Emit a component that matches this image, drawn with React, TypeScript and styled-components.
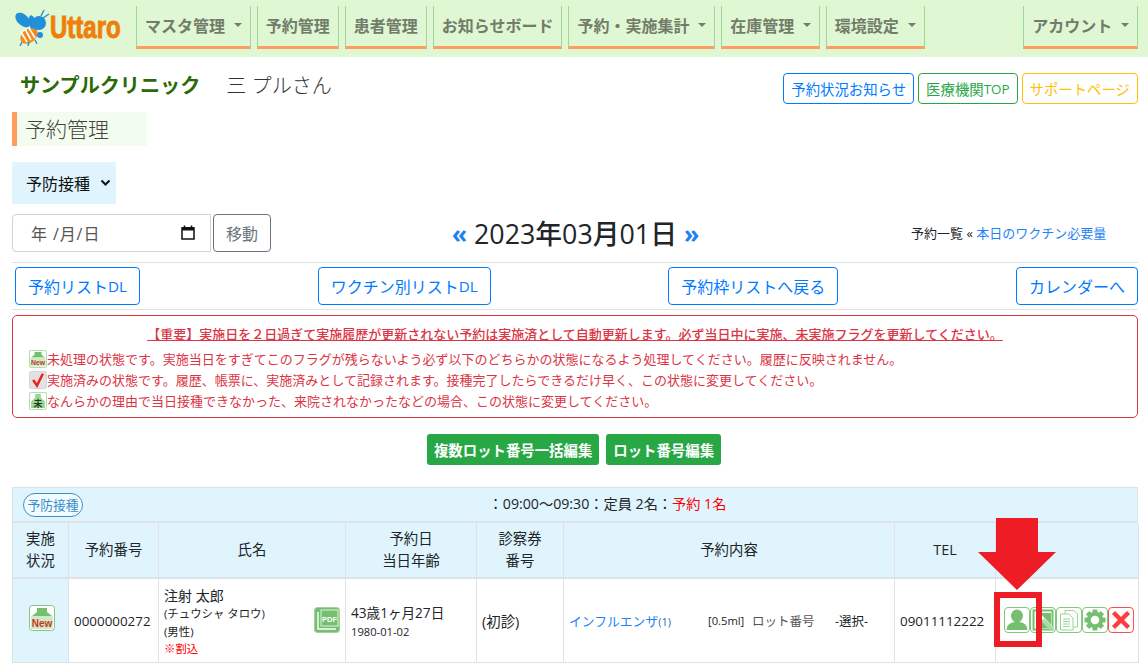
import React from 'react';
import styled, { createGlobalStyle } from 'styled-components';

const GlobalStyle = createGlobalStyle`
  html, body {
    margin: 0;
    padding: 0;
    background: #fff;
    overflow: hidden;
  }
  body {
    font-family: "Open Sans", "Noto Sans CJK JP", sans-serif;
    color: #212529;
  }
  * { box-sizing: border-box; }
`;

const Page = styled.div`
  position: relative;
  width: 1148px;
  height: 669px;
  overflow: hidden;
`;

// ---- top navigation ----
const NavBar = styled.nav`
  display: flex;
  align-items: flex-start;
  height: 57px;
  padding: 6px 10px 0 14px;
  background: #dff7d2;
`;

const Logo = styled.div`
  display: flex;
  flex: none;
  align-items: center;
  width: 122px;
  height: 42px;
`;

const BeeSvg = styled.svg`
  flex: none;
`;

const LogoText = styled.span`
  display: inline-block;
  flex: none;
  width: 70px;
  margin-left: 0;
  font-family: "Liberation Sans", sans-serif;
  font-size: 32px;
  font-weight: 700;
  line-height: 1;
  color: #f07f09;
  transform: scaleX(0.75);
  transform-origin: left center;
  -webkit-text-stroke: 1px #f07f09;
`;

const NavItems = styled.div`
  display: flex;
  flex: 1;
  gap: 6px;
`;

const NavItem = styled.a<{ $right?: boolean }>`
  display: flex;
  align-items: center;
  height: 43px;
  padding: 0 8px 3px;
  margin-left: ${p => (p.$right ? 'auto' : '0')};
  border-left: 1px solid #9fd69a;
  border-right: 1px solid #9fd69a;
  border-bottom: 3px solid #ff9d5c;
  font-size: 16px;
  font-weight: 700;
  color: #727c6b;
  white-space: nowrap;
`;

const Caret = styled.span`
  display: inline-block;
  margin-left: 8.7px;
  border-top: 4.8px solid #727c6b;
  border-left: 4.8px solid transparent;
  border-right: 4.8px solid transparent;
`;

// ---- clinic line ----
const ClinicRow = styled.div`
  display: flex;
  align-items: flex-start;
  justify-content: space-between;
  height: 49px;
  padding: 16px 10px 0 20px;
`;

const ClinicInfo = styled.div`
  display: flex;
  align-items: center;
  gap: 26px;
  height: 26px;
  font-size: 20.1px;
  line-height: 26px;
`;

const ClinicName = styled.span`
  font-weight: 700;
  color: #2b6a07;
`;

const StaffName = styled.span`
  font-weight: 300;
  color: #333;
`;

const HeaderLinks = styled.div`
  display: flex;
  gap: 4px;
`;

const SmallLink = styled.a<{ $color: string }>`
  display: flex;
  align-items: center;
  height: 31px;
  padding: 0 7px;
  border: 1px solid ${p => p.$color};
  border-radius: 4px;
  font-size: 14.4px;
  color: ${p => p.$color};
  white-space: nowrap;
`;

const TopLabel = styled.span`
  font-size: 13.4px;
`;

const TitleWrap = styled.div`
  padding: 6px 0 0 12px;
`;

const PageTitle = styled.h1`
  display: flex;
  align-items: center;
  width: 135px;
  height: 34px;
  margin: 0;
  padding: 0 0 3px 8px;
  background: #f3fdef;
  border-left: 5px solid #ff9d5c;
  font-size: 21px;
  font-weight: 300;
  color: #444;
`;

const SelectWrap = styled.div`
  padding: 16px 0 0 12px;
`;

const Kind = styled.div`
  display: flex;
  align-items: center;
  justify-content: space-between;
  width: 104px;
  height: 42px;
  padding: 0 5px 0 14px;
  background: #dff4fd;
  font-size: 16px;
  color: #111;
`;

// ---- date row ----
const DateRow = styled.div`
  display: grid;
  grid-template-columns: 259px 1fr 227px;
  align-items: center;
  height: 38px;
  margin: 9px 10px 0 12px;
`;

const DateGroup = styled.div`
  display: flex;
  gap: 2px;
`;

const DateInput = styled.div`
  display: flex;
  align-items: center;
  justify-content: space-between;
  width: 199px;
  height: 38px;
  padding: 0 15px 0 18px;
  border: 1px solid #ced4da;
  border-radius: 4px 0 0 4px;
  font-size: 16px;
  letter-spacing: 0.9px;
  color: #555;
`;

const MoveButton = styled.button`
  width: 58px;
  height: 38px;
  padding: 0;
  background: #fff;
  border: 1px solid #6c757d;
  border-radius: 4px;
  font: inherit;
  font-size: 16px;
  color: #6c757d;
`;

const DateHeading = styled.div`
  display: flex;
  align-items: center;
  justify-content: center;
  gap: 7px;
  padding-right: 31px;
  font-size: 26.8px;
  font-weight: 500;
  color: #212529;
`;

const DateArrow = styled.a`
  font-size: 25px;
  font-weight: 700;
  color: #1f7ff0;
`;

const Crumbs = styled.div`
  font-size: 13px;
  white-space: nowrap;
  color: #212529;
`;

const CrumbLink = styled.a`
  color: #1f82f5;
`;

const Rule = styled.hr<{ $top?: number }>`
  height: 1px;
  margin: ${p => p.$top ?? 0}px 10px 0 12px;
  border: 0;
  background: #e2e2e2;
`;

const ActionRow = styled.div`
  display: flex;
  justify-content: space-between;
  padding: 4px 10px 4px 15px;
`;

const OutlineButton = styled.a`
  display: flex;
  align-items: center;
  height: 38px;
  padding: 0 12px;
  border: 1px solid #007bff;
  border-radius: 4px;
  font-size: 16px;
  color: #007bff;
  white-space: nowrap;
`;

const LatinSmall = styled.span`
  font-size: 15.2px;
`;

// ---- notice ----
const Alert = styled.div`
  height: 103px;
  margin: 5px 10px 0 12px;
  padding: 8px 16px 0;
  border: 1px solid #dc3545;
  border-radius: 5px;
  font-size: 13px;
  color: #dc3545;
`;

const AlertTitle = styled.div`
  height: 24px;
  line-height: 21px;
  text-align: center;
  font-weight: 500;
  text-decoration: underline;
`;

const AlertLine = styled.div`
  display: flex;
  align-items: center;
  height: 21px;
  white-space: nowrap;
`;

const LotRow = styled.div`
  display: flex;
  justify-content: center;
  gap: 7px;
  padding: 16px 0 0;
`;

const LotButton = styled.a`
  display: flex;
  align-items: center;
  height: 31px;
  padding: 0 7px;
  background: #28a745;
  border-radius: 3px;
  font-size: 14.4px;
  font-weight: 700;
  color: #fff;
  white-space: nowrap;
`;

// ---- reservation table ----
const TableWrap = styled.div`
  margin: 22px 10px 0 12px;
`;

const Caption = styled.div`
  display: flex;
  align-items: center;
  height: 36px;
  padding: 0 0 0 10px;
  background: #dff4fd;
  border: 1px solid #dee2e6;
  border-bottom-width: 2px;
`;

const Pill = styled.span`
  display: flex;
  align-items: center;
  justify-content: center;
  width: 60px;
  height: 24px;
  border: 1px solid #3a8fc8;
  border-radius: 12px;
  font-size: 12.8px;
  color: #3a8fc8;
  background: #f2fbff;
`;

const CaptionText = styled.div`
  flex: 1;
  padding: 0 5px 3px 0;
  text-align: center;
  font-size: 14.2px;
`;

const RedText = styled.span`
  color: #f00;
`;

const Table = styled.table`
  width: 1126px;
  table-layout: fixed;
  border-collapse: collapse;
  font-size: 14.4px;
`;

const Th = styled.th<{ $w?: number }>`
  width: ${p => (p.$w ? `${p.$w}px` : 'auto')};
  height: 55px;
  padding: 0;
  background: #dff4fd;
  border: 1px solid #dee2e6;
  border-top: 0;
  border-bottom-width: 2px;
  font-weight: 400;
  line-height: 22px;
  text-align: center;
`;

const Td = styled.td<{ $tint?: boolean; $center?: boolean }>`
  height: 84px;
  padding: 0 ${p => (p.$center ? 0 : 5)}px 0 ${p => (p.$center ? 2 : 5)}px;
  background: ${p => (p.$tint ? '#dff4fd' : '#fff')};
  border: 1px solid #dee2e6;
  text-align: ${p => (p.$center ? 'center' : 'left')};
  vertical-align: middle;
`;

const Digits = styled.span`
  font-size: 13.4px;
`;

const NameCell = styled.div`
  display: flex;
  align-items: center;
  justify-content: space-between;
`;

const NameLines = styled.div`
  display: flex;
  flex-direction: column;
  padding-top: 3px;
`;

const NameMain = styled.span`
  font-size: 14px;
  line-height: 19px;
`;

const NameSub = styled.span<{ $red?: boolean }>`
  font-size: 11.4px;
  line-height: 17.4px;
  color: ${p => (p.$red ? '#f00' : '#212529')};
`;

const AgeBlock = styled.div`
  padding-top: 3px;
`;

const AgeMain = styled.div`
  font-size: 13.6px;
  line-height: 20px;
`;

const AgeSub = styled.div`
  font-size: 11.2px;
  line-height: 18px;
`;

const PlanCell = styled.div`
  display: flex;
  align-items: center;
  font-size: 12.5px;
  white-space: nowrap;
`;

const PlanLink = styled.a`
  width: 139px;
  font-size: 12.8px;
  color: #1f82f5;
`;

const PlanSmall = styled.small`
  font-size: 11px;
  color: #2b6fb0;
`;

const PlanDose = styled.span`
  width: 44px;
  font-size: 11.2px;
`;

const PlanLot = styled.span`
  width: 83px;
  color: #555;
`;

const Tools = styled.div`
  display: flex;
  padding-left: 3px;
`;

const ToolBox = styled.span<{ $red?: boolean }>`
  display: flex;
  align-items: center;
  justify-content: center;
  width: 26px;
  height: 26px;
  background: #fff;
  border: 1px solid ${p => (p.$red ? '#ff4d4d' : '#7fc97a')};
  border-radius: 4px;
`;

// ---- annotation over the screenshot ----
const ArrowMark = styled.svg`
  position: absolute;
  left: 978px;
  top: 518px;
`;

const RedFrame = styled.div`
  position: absolute;
  left: 994px;
  top: 592px;
  width: 48px;
  height: 55px;
  border: 6px solid #ee1c25;
`;

const StatusBox = styled.svg`
  flex: none;
`;

function BeeLogo() {
  return (
    <BeeSvg width="36" height="38" viewBox="0 0 36 38">
      <ellipse cx="9" cy="12" rx="9" ry="5.5" fill="#2190d8" transform="rotate(42 9 12)" />
      <ellipse cx="19" cy="16" rx="3.6" ry="9" fill="#2190d8" transform="rotate(-15 19 16)" />
      <circle cx="25" cy="15" r="7" fill="#2190d8" />
      <ellipse cx="15" cy="28" rx="6.6" ry="9.5" fill="#f58a1f" transform="rotate(55 15 28)" />
      <path d="M11 21 L17 32 M15 20 L21 30 M7 24 L13 34" stroke="#fff" strokeWidth="1.6" />
      <circle cx="26" cy="27" r="3" fill="#2190d8" />
      <path d="M27 8 L30 2 M29 10 L35 6 M8 34 L6 38 M15 34 L14 38 M21 32 L23 36" stroke="#2190d8" strokeWidth="1.4" fill="none" />
    </BeeSvg>
  );
}

function NewIcon({ size = 26 }: { size?: number }) {
  return (
    <StatusBox width={size} height={size} viewBox="0 0 26 26">
      <rect x="0.5" y="0.5" width="25" height="25" rx="3" fill="#fff" stroke="#7fc97a" />
      <path d="M8 3 H18 V7 L23 11 H3 L8 7 Z" fill="#74bf70" />
      <rect x="2" y="11" width="22" height="13" rx="1" fill="#cfe9cb" />
      <text x="13" y="22" textAnchor="middle" fontFamily="Liberation Sans" fontSize="10" fontWeight="700" fill="#c4391c">New</text>
    </StatusBox>
  );
}

function DoneIcon() {
  return (
    <StatusBox width={18} height={18} viewBox="0 0 26 26">
      <rect x="0.5" y="0.5" width="25" height="25" rx="3" fill="#e2e2e2" stroke="#c8c8c8" />
      <path d="M6 13 L11.5 21 L20 4" fill="none" stroke="#e8231a" strokeWidth="3.6" />
    </StatusBox>
  );
}

function MissedIcon() {
  return (
    <StatusBox width={18} height={18} viewBox="0 0 26 26">
      <rect x="0.5" y="0.5" width="25" height="25" rx="3" fill="#fff" stroke="#7fc97a" />
      <path d="M9 3 H17 V8 L23 14 V23 H3 V14 L9 8 Z" fill="#9ad596" />
      <text x="13" y="21" textAnchor="middle" fontFamily="Noto Sans CJK JP" fontSize="13" fontWeight="700" fill="#1d3d1d">未</text>
    </StatusBox>
  );
}

function PdfIcon() {
  return (
    <svg width="26" height="26" viewBox="0 0 26 26">
      <rect x="0.5" y="0.5" width="25" height="25" rx="3" fill="#74bf70" stroke="#9ad596" />
      <path d="M4 5 V22 H22" fill="none" stroke="#fff" strokeWidth="1.4" />
      <rect x="7" y="3" width="17" height="16" fill="#74bf70" stroke="#fff" strokeWidth="0.8" />
      <text x="15.5" y="14.5" textAnchor="middle" fontFamily="Liberation Sans" fontSize="7.5" fontWeight="700" fill="#fff">PDF</text>
    </svg>
  );
}

function ActionTools() {
  return (
    <Tools>
      <ToolBox>
        <svg width="24" height="24" viewBox="0 0 24 24">
          <ellipse cx="12" cy="8" rx="6" ry="6.5" fill="#74bf70" />
          <path d="M1.5 22 C2 15 7 14 12 14 C17 14 22 15 22.5 22 Z" fill="#74bf70" />
        </svg>
      </ToolBox>
      <ToolBox>
        <svg width="24" height="24" viewBox="0 0 24 24">
          <rect x="2.5" y="2.5" width="19" height="19" fill="#fff" stroke="#74bf70" strokeWidth="2" />
          <rect x="6" y="5" width="14" height="15" fill="#74bf70" />
          <path d="M8 6 L22 21" stroke="#fff" strokeWidth="3" />
          <path d="M12 12 L22 22" stroke="#a8dba5" strokeWidth="4" />
        </svg>
      </ToolBox>
      <ToolBox>
        <svg width="24" height="24" viewBox="0 0 24 24" fill="none" stroke="#9ad596">
          <path d="M8 2.5 H17 L20.5 6 V19 H8 Z" />
          <path d="M3.5 6 H12 L16 10 V22 H3.5 Z" fill="#fff" />
          <path d="M6 11 H13 M6 13.5 H13 M6 16 H13 M6 18.5 H13" />
        </svg>
      </ToolBox>
      <ToolBox>
        <svg width="24" height="24" viewBox="0 0 24 24">
          <g fill="#74bf70">
            {[0, 45, 90, 135, 180, 225, 270, 315].map(a => (
              <rect key={a} x="9.6" y="1.5" width="4.8" height="5" transform={`rotate(${a} 12 12)`} />
            ))}
          </g>
          <circle cx="12" cy="12" r="6.3" fill="none" stroke="#74bf70" strokeWidth="4" />
        </svg>
      </ToolBox>
      <ToolBox $red>
        <svg width="24" height="24" viewBox="0 0 24 24">
          <path d="M4.5 4.5 L19.5 19.5 M19.5 4.5 L4.5 19.5" stroke="#ff3b3b" strokeWidth="4.4" />
        </svg>
      </ToolBox>
    </Tools>
  );
}

export default function App() {
  return (
    <Page>
      <GlobalStyle />
      <NavBar>
        <Logo>
          <BeeLogo />
          <LogoText>Uttaro</LogoText>
        </Logo>
        <NavItems>
          <NavItem>マスタ管理<Caret /></NavItem>
          <NavItem>予約管理</NavItem>
          <NavItem>患者管理</NavItem>
          <NavItem>お知らせボード</NavItem>
          <NavItem>予約・実施集計<Caret /></NavItem>
          <NavItem>在庫管理<Caret /></NavItem>
          <NavItem>環境設定<Caret /></NavItem>
          <NavItem $right>アカウント<Caret /></NavItem>
        </NavItems>
      </NavBar>

      <ClinicRow>
        <ClinicInfo>
          <ClinicName>サンプルクリニック</ClinicName>
          <StaffName>三 プルさん</StaffName>
        </ClinicInfo>
        <HeaderLinks>
          <SmallLink $color="#007bff">予約状況お知らせ</SmallLink>
          <SmallLink $color="#28a745">医療機関<TopLabel>TOP</TopLabel></SmallLink>
          <SmallLink $color="#ffc107">サポートページ</SmallLink>
        </HeaderLinks>
      </ClinicRow>

      <TitleWrap>
        <PageTitle>予約管理</PageTitle>
      </TitleWrap>

      <SelectWrap>
        <Kind>
          予防接種
          <svg width="11" height="8" viewBox="0 0 11 8">
            <path d="M1.5 1.5 L5.5 5.5 L9.5 1.5" fill="none" stroke="#111" strokeWidth="2" />
          </svg>
        </Kind>
      </SelectWrap>

      <DateRow>
        <DateGroup>
          <DateInput>
            <span>年 /月/日</span>
            <svg width="14" height="15" viewBox="0 0 14 15">
              <path d="M1 3 H13 V14 H1 Z" fill="none" stroke="#111" strokeWidth="1.5" />
              <rect x="1" y="2" width="12" height="3.5" fill="#111" />
              <path d="M3.5 0.5 V3 M10.5 0.5 V3" stroke="#111" strokeWidth="1.5" />
            </svg>
          </DateInput>
          <MoveButton>移動</MoveButton>
        </DateGroup>
        <DateHeading>
          <DateArrow>«</DateArrow>
          <span>2023年03月01日</span>
          <DateArrow>»</DateArrow>
        </DateHeading>
        <Crumbs>
          予約一覧 « <CrumbLink>本日のワクチン必要量</CrumbLink>
        </Crumbs>
      </DateRow>

      <Rule $top={11} />
      <ActionRow>
        <OutlineButton>予約リスト<LatinSmall>DL</LatinSmall></OutlineButton>
        <OutlineButton>ワクチン別リスト<LatinSmall>DL</LatinSmall></OutlineButton>
        <OutlineButton>予約枠リストへ戻る</OutlineButton>
        <OutlineButton>カレンダーへ</OutlineButton>
      </ActionRow>
      <Rule />

      <Alert>
        <AlertTitle>【重要】実施日を２日過ぎて実施履歴が更新されない予約は実施済として自動更新します。必ず当日中に実施、未実施フラグを更新してください。</AlertTitle>
        <AlertLine>
          <NewIcon size={18} />
          未処理の状態です。実施当日をすぎてこのフラグが残らないよう必ず以下のどちらかの状態になるよう処理してください。履歴に反映されません。
        </AlertLine>
        <AlertLine>
          <DoneIcon />
          実施済みの状態です。履歴、帳票に、実施済みとして記録されます。接種完了したらできるだけ早く、この状態に変更してください。
        </AlertLine>
        <AlertLine>
          <MissedIcon />
          なんらかの理由で当日接種できなかった、来院されなかったなどの場合、この状態に変更してください。
        </AlertLine>
      </Alert>

      <LotRow>
        <LotButton>複数ロット番号一括編集</LotButton>
        <LotButton>ロット番号編集</LotButton>
      </LotRow>

      <TableWrap>
        <Caption>
          <Pill>予防接種</Pill>
          <CaptionText>
            ：09:00～09:30：定員 2名：<RedText>予約 1名</RedText>
          </CaptionText>
        </Caption>
        <Table>
          <thead>
            <tr>
              <Th $w={56}>実施<br />状況</Th>
              <Th $w={90}>予約番号</Th>
              <Th $w={187}>氏名</Th>
              <Th $w={131}>予約日<br />当日年齢</Th>
              <Th $w={87}>診察券<br />番号</Th>
              <Th $w={331}>予約内容</Th>
              <Th $w={101}>TEL</Th>
              <Th $w={143} />
            </tr>
          </thead>
          <tbody>
            <tr>
              <Td $tint $center><NewIcon /></Td>
              <Td><Digits>0000000272</Digits></Td>
              <Td>
                <NameCell>
                  <NameLines>
                    <NameMain>注射 太郎</NameMain>
                    <NameSub>(チュウシャ タロウ)</NameSub>
                    <NameSub>(男性)</NameSub>
                    <NameSub $red>※割込</NameSub>
                  </NameLines>
                  <PdfIcon />
                </NameCell>
              </Td>
              <Td>
                <AgeBlock>
                  <AgeMain>43歳1ヶ月27日</AgeMain>
                  <AgeSub>1980-01-02</AgeSub>
                </AgeBlock>
              </Td>
              <Td>(初診)</Td>
              <Td>
                <PlanCell>
                  <PlanLink>インフルエンザ<PlanSmall>(1)</PlanSmall></PlanLink>
                  <PlanDose>[0.5ml]</PlanDose>
                  <PlanLot>ロット番号</PlanLot>
                  <span>-選択-</span>
                </PlanCell>
              </Td>
              <Td><Digits>09011112222</Digits></Td>
              <Td><ActionTools /></Td>
            </tr>
          </tbody>
        </Table>
      </TableWrap>

      <ArrowMark width="78" height="72" viewBox="0 0 78 72">
        <path d="M18 0 H60 V34 H78 L39 72 L0 34 H18 Z" fill="#ee1c25" />
      </ArrowMark>
      <RedFrame />
    </Page>
  );
}
